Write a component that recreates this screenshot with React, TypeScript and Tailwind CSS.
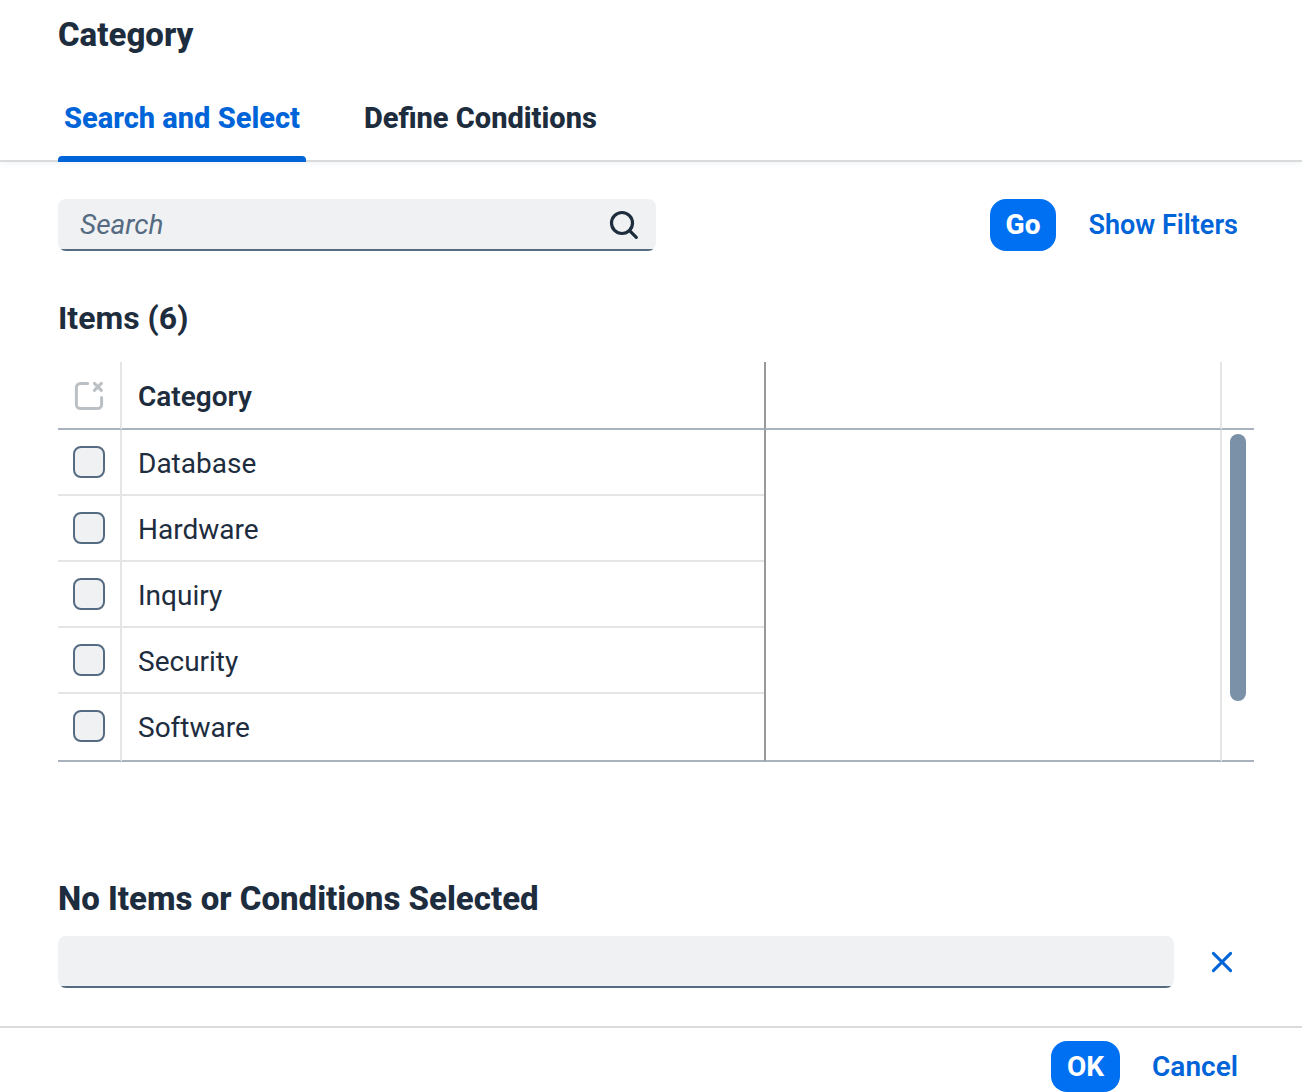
import { useState } from "react";

const categories = ["Database", "Hardware", "Inquiry", "Security", "Software"];

function SearchIcon() {
  return (
    <svg width="32" height="32" viewBox="0 0 32 32" fill="none" stroke="#1d2d3e" strokeWidth="3.2" strokeLinecap="round" aria-hidden="true">
      <circle cx="14" cy="14" r="10.5" />
      <path d="M21.8 21.8 28.3 28.3" />
    </svg>
  );
}

function ClearSelectionIcon() {
  return (
    <svg width="32" height="32" viewBox="0 0 32 32" fill="none" stroke="#bbc0c5" strokeWidth="3" strokeLinecap="round" aria-hidden="true">
      <path d="M14.7 3.4H7.4a4 4 0 0 0-4 4v17.2a4 4 0 0 0 4 4h17.2a4 4 0 0 0 4-4V17.6" />
      <path d="M21.4 3.4 28.4 10.4M28.4 3.4 21.4 10.4" />
    </svg>
  );
}

function CloseIcon() {
  return (
    <svg width="32" height="32" viewBox="0 0 32 32" fill="none" stroke="#0064d9" strokeWidth="3" strokeLinecap="round" aria-hidden="true">
      <path d="M7.4 7.4 24.6 24.6M24.6 7.4 7.4 24.6" />
    </svg>
  );
}

export default function App() {
  const [query, setQuery] = useState("");
  const [selection, setSelection] = useState("");

  return (
    <div className="bg-white font-['Roboto',sans-serif] text-[28px] leading-8 text-[#1d2d3e]">
      <header className="border-b-2 border-[#d9dbdd] pr-12 pl-[58px] shadow-[0_2px_6px_#f1f4f6]">
        <h1 className="pt-[15px] text-[33px] leading-10 font-extrabold">Category</h1>
        <div role="tablist" className="-mb-0.5 flex gap-[52px] pt-[23px]">
          <button role="tab" aria-selected="true" className="flex flex-col text-[#0064d9]">
            <span className="h-[78px] px-1.5 pt-6 text-[29px] font-extrabold">Search and Select</span>
            <span className="h-1.5 w-full rounded-t bg-[#0064d9]" />
          </button>
          <button role="tab" aria-selected="false" className="flex flex-col">
            <span className="h-[78px] px-1.5 pt-6 text-[29px] font-extrabold">Define Conditions</span>
          </button>
        </div>
      </header>

      <main className="pt-[37px] pr-12 pb-[38px] pl-[58px]">
        <div className="flex items-center justify-between">
          <div className="flex h-[52px] w-1/2 items-center rounded-lg bg-[linear-gradient(to_top,#556b82_2px,#eff1f2_2px)] pr-4 pl-[22px]">
            <input
              type="text"
              aria-label="Search"
              placeholder="Search"
              value={query}
              onChange={(e) => setQuery(e.target.value)}
              className="min-w-0 flex-1 bg-transparent outline-none placeholder:text-[#556b82] placeholder:italic placeholder:opacity-100"
            />
            <button aria-label="Start search">
              <SearchIcon />
            </button>
          </div>
          <div className="flex items-center gap-4">
            <button className="h-[52px] rounded-2xl bg-[#0070f2] px-4 font-extrabold text-white">Go</button>
            <button className="h-[52px] px-4 text-[27px] font-semibold text-[#0064d9]">Show Filters</button>
          </div>
        </div>

        <h2 className="pt-[47px] pb-6 text-[32px] leading-10 font-bold">Items (6)</h2>

        <table className="w-full table-fixed border-separate border-spacing-0 text-left">
          <colgroup>
            <col className="w-16" />
            <col className="w-[642px]" />
            <col />
            <col className="w-8" />
          </colgroup>
          <thead>
            <tr className="h-[68px]">
              <th className="border-r-2 border-b-2 border-r-[#e5e5e5] border-b-[#a8b3bd] px-0 pt-0.5 pb-0">
                <button aria-label="Clear selection" className="mx-auto block w-8">
                  <ClearSelectionIcon />
                </button>
              </th>
              <th className="border-b-2 border-[#a8b3bd] pt-1 pr-0 pb-0 pl-4 font-semibold">Category</th>
              <th className="border-x-2 border-b-2 border-r-[#e5e5e5] border-b-[#a8b3bd] border-l-[#999999] p-0" />
              <th className="border-b-2 border-[#a8b3bd] p-0" />
            </tr>
          </thead>
          <tbody>
            {categories.map((name, i) => (
              <tr key={name} className="group h-[66px] last:h-[68px]">
                <td className="border-r-2 border-b-2 border-[#e5e5e5] p-0 group-last:border-b-[#a8b3bd] group-last:pb-0.5">
                  <input
                    id={name}
                    type="checkbox"
                    className="mx-auto block size-8 appearance-none rounded-lg border-2 border-[#556b82] bg-[#eff1f2] checked:bg-[#0064d9]"
                  />
                </td>
                <td className="border-b-2 border-[#e5e5e5] pt-1 pr-0 pb-0 pl-4 group-last:border-[#a8b3bd] group-last:pb-0.5">
                  <label htmlFor={name}>{name}</label>
                </td>
                {i === 0 && (
                  <>
                    <td rowSpan={5} className="border-x-2 border-b-2 border-r-[#e5e5e5] border-b-[#a8b3bd] border-l-[#999999] p-0" />
                    <td rowSpan={5} className="border-b-2 border-[#a8b3bd] px-2 pt-1 pb-0 align-top">
                      <div className="h-[267px] w-4 rounded-full bg-[#7b91a8]" />
                    </td>
                  </>
                )}
              </tr>
            ))}
          </tbody>
        </table>

        <h2 className="pt-[117px] pb-[17px] text-[33px] leading-10 font-extrabold">
          <label htmlFor="selected">No Items or Conditions Selected</label>
        </h2>
        <div className="flex items-center gap-8">
          <input
            id="selected"
            type="text"
            value={selection}
            onChange={(e) => setSelection(e.target.value)}
            className="h-[52px] min-w-0 flex-1 rounded-lg bg-[linear-gradient(to_top,#556b82_2px,#eff1f2_2px)] px-[22px] outline-none"
          />
          <button aria-label="Remove all" className="mr-4" onClick={() => setSelection("")}>
            <CloseIcon />
          </button>
        </div>
      </main>

      <footer className="flex justify-end gap-4 border-t-2 border-[#d9dbdd] pt-[13px] pr-12">
        <button className="h-[51px] rounded-2xl bg-[#0070f2] px-4 font-bold text-white">OK</button>
        <button className="h-[51px] px-4 font-semibold text-[#0064d9]">Cancel</button>
      </footer>
    </div>
  );
}
